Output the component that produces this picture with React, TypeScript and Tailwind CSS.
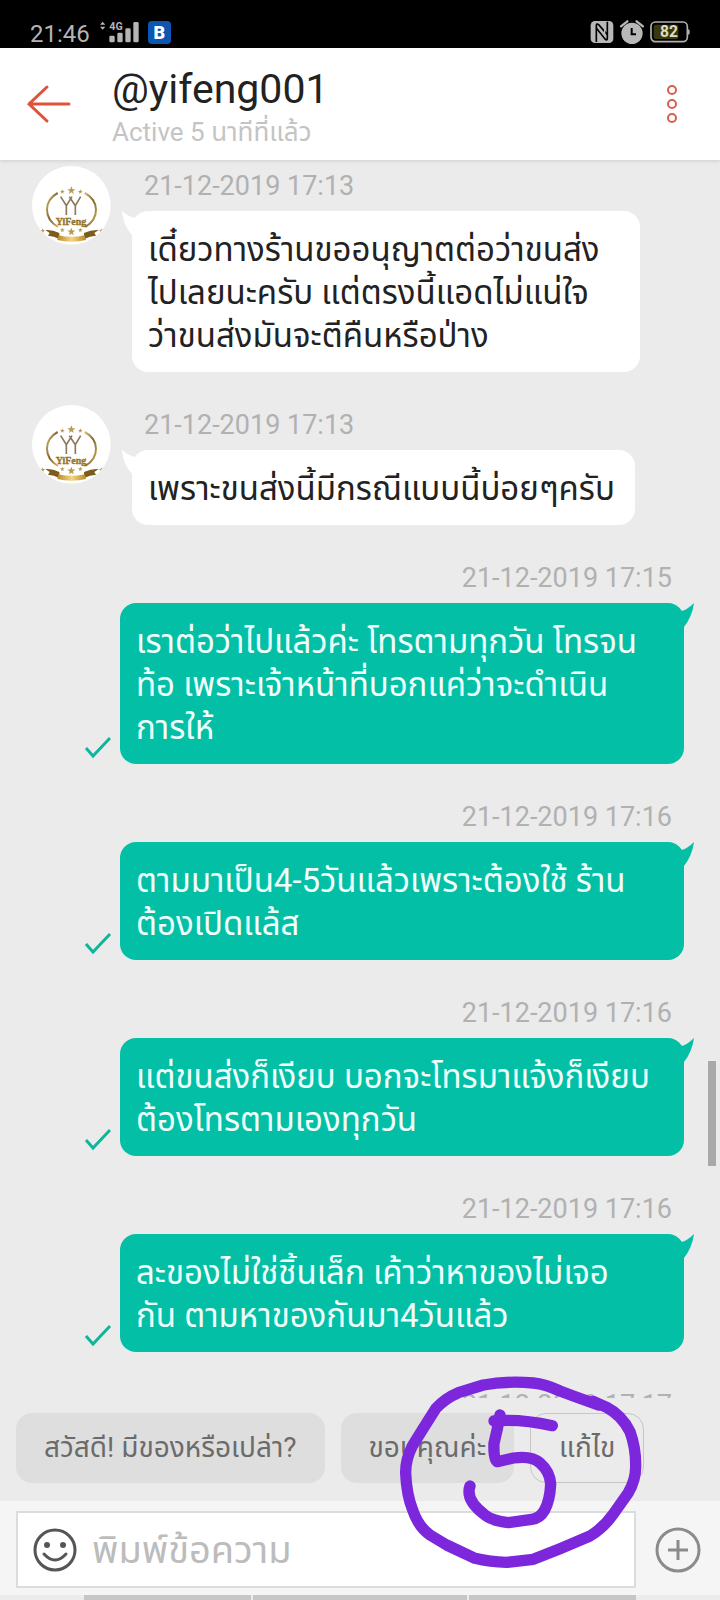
import { useState } from "react";

type Message = {
  id: number;
  mine: boolean;
  time: string;
  text: string;
  wide?: boolean;
};

const MESSAGES: Message[] = [
  {
    id: 1,
    mine: false,
    time: "21-12-2019 17:13",
    text: "เดี๋ยวทางร้านขออนุญาตต่อว่าขนส่ง\nไปเลยนะครับ แต่ตรงนี้แอดไม่แน่ใจ\nว่าขนส่งมันจะตีคืนหรือป่าง",
    wide: true,
  },
  { id: 2, mine: false, time: "21-12-2019 17:13", text: "เพราะขนส่งนี้มีกรณีแบบนี้บ่อยๆครับ" },
  {
    id: 3,
    mine: true,
    time: "21-12-2019 17:15",
    text: "เราต่อว่าไปแล้วค่ะ โทรตามทุกวัน โทรจน\nท้อ เพราะเจ้าหน้าที่บอกแค่ว่าจะดำเนิน\nการให้",
  },
  { id: 4, mine: true, time: "21-12-2019 17:16", text: "ตามมาเป็น4-5วันแล้วเพราะต้องใช้ ร้าน\nต้องเปิดแล้ส" },
  { id: 5, mine: true, time: "21-12-2019 17:16", text: "แต่ขนส่งก็เงียบ บอกจะโทรมาแจ้งก็เงียบ\nต้องโทรตามเองทุกวัน" },
  { id: 6, mine: true, time: "21-12-2019 17:16", text: "ละของไม่ใช่ชิ้นเล็ก เค้าว่าหาของไม่เจอ\nกัน ตามหาของกันมา4วันแล้ว" },
  { id: 7, mine: true, time: "21-12-2019 17:17", text: "" },
];

const STAR = "M0 -10 L3 -3 L10 -3 L4 2 L6 9 L0 5 L-6 9 L-4 2 L-10 -3 L-3 -3 Z";

function StatusBar() {
  return (
    <div className="flex h-12 shrink-0 items-end justify-between bg-black pr-[30px] pl-[30px] text-[#b4b4b4]">
      <div className="flex items-end">
        <span className="text-2xl leading-7">21:46</span>
        <svg className="mb-1 ml-2.5 h-6 w-10" viewBox="0 0 120 72" fill="currentColor" aria-label="4G signal">
          <path d="M0 14 L8 5 L16 14 Z M0 20 L8 29 L16 20 Z" />
          <text x="28" y="30" fontSize="32" fontWeight="700">4G</text>
          <rect x="28" y="47" width="16" height="20" rx="4" />
          <rect x="52" y="38" width="16" height="29" rx="4" />
          <rect x="76" y="25" width="16" height="42" rx="4" />
          <rect x="100" y="6" width="16" height="61" rx="4" />
        </svg>
        <span className="mb-1 ml-2 flex size-[23px] items-center justify-center rounded-sm bg-[#0b56b3] text-lg leading-none font-black text-white">
          B
        </span>
      </div>
      <div className="mb-1 flex items-center gap-1.5">
        <svg className="size-6" viewBox="0 0 72 72" aria-label="NFC">
          <rect x="2" y="3" width="68" height="66" rx="13" fill="#b8b8b8" />
          <path d="M19 66 V17 Q19 9 26 14 L52 44 V5 M52 5 V55 Q52 63 45 57 L19 24" fill="none" stroke="#000" strokeWidth="5" />
          <path d="M28 27 L44 46 V10" fill="none" stroke="#b8b8b8" strokeWidth="4" />
        </svg>
        <svg className="size-6" viewBox="0 0 72 72" aria-label="Alarm">
          <circle cx="36" cy="40" r="32" fill="#b8b8b8" />
          <path d="M3 19 L22 4 M50 4 L69 19" stroke="#b8b8b8" strokeWidth="7" strokeLinecap="round" />
          <path d="M35 24 V43 H48" fill="none" stroke="#000" strokeWidth="6" />
        </svg>
        <svg className="h-6 w-10" viewBox="0 0 120 72" aria-label="Battery 82">
          <rect x="3" y="6" width="109" height="59" rx="13" fill="none" stroke="#b0b0b0" strokeWidth="5" />
          <path d="M114 27 L119 31 V41 L114 45 Z" fill="#b0b0b0" />
          <rect x="11" y="14" width="74" height="43" rx="7" fill="#3b360c" />
          <text x="57" y="52" textAnchor="middle" fontSize="47" fontWeight="700" fill="#dedcc4">82</text>
        </svg>
      </div>
    </div>
  );
}

function ChatHeader() {
  return (
    <header className="relative z-10 flex h-28 shrink-0 items-center bg-white pr-[42px] pl-6 shadow-[0_1px_4px_rgba(0,0,0,0.12)]">
      <button type="button" aria-label="Back" className="h-10 w-12">
        <svg className="h-10 w-12" viewBox="0 0 48 40" fill="none" stroke="#e0523a" strokeWidth="3" strokeLinecap="round">
          <path d="M45 20 H5 M23 3 L5 20 L23 37" />
        </svg>
      </button>
      <div className="ml-10 flex-1 pt-2">
        <h1 className="text-[41px] leading-12 text-[#222222]">@yifeng001</h1>
        <p className="text-[26px] leading-[38px] text-[#c4c4c4]">Active 5 นาทีที่แล้ว</p>
      </div>
      <button type="button" aria-label="More" className="h-10 w-3">
        <svg className="h-10 w-3" viewBox="0 0 12 40" fill="none" stroke="#d4604e" strokeWidth="2">
          <circle cx="6" cy="6" r="4" />
          <circle cx="6" cy="20" r="4" />
          <circle cx="6" cy="34" r="4" />
        </svg>
      </button>
    </header>
  );
}

function Avatar() {
  return (
    <svg className="size-[79px] shrink-0" viewBox="0 0 237 237" role="img" aria-label="YiFeng">
      <defs>
        <linearGradient id="gold" x1="0" y1="0" x2="1" y2="1">
          <stop offset="0" stopColor="#d9bd76" />
          <stop offset="0.5" stopColor="#80642c" />
          <stop offset="1" stopColor="#d8b560" />
        </linearGradient>
        <linearGradient id="ribbon">
          <stop offset="0" stopColor="#b88a2a" />
          <stop offset="0.5" stopColor="#f3d583" />
          <stop offset="1" stopColor="#b88a2a" />
        </linearGradient>
        <clipPath id="disc">
          <circle cx="118" cy="118" r="118" />
        </clipPath>
      </defs>
      <circle cx="118" cy="118" r="118" fill="#fff" />
      <g clipPath="url(#disc)">
        <path d="M77 81 C35 104 33 156 78 183" fill="none" stroke="url(#gold)" strokeWidth="6" />
        <path d="M158 81 C202 104 204 156 160 183" fill="none" stroke="url(#gold)" strokeWidth="6" />
        <path d="M86 92 L103 119 L120 92 M103 119 V147 M112 92 L130 119 L146 92 M130 119 V147" fill="none" stroke="#8b795b" strokeWidth="5" />
        <text x="117" y="176" textAnchor="middle" fontFamily="Liberation Serif, serif" fontSize="30" fontWeight="700" fill="#a07a26" stroke="#8a6a24" strokeWidth="1">
          YiFeng
        </text>
        <g fill="#b99a52">
          <path d={STAR} transform="translate(118 73) scale(1.2)" />
          <path d={STAR} transform="translate(91 77) scale(0.7)" />
          <path d={STAR} transform="translate(145 77) scale(0.7)" />
          <path d={STAR} transform="translate(118 197) scale(1.2)" />
          <path d={STAR} transform="translate(91 192) scale(0.7)" />
          <path d={STAR} transform="translate(145 192) scale(0.7)" />
          <path d={STAR} transform="translate(32 194) scale(0.7)" />
          <path d={STAR} transform="translate(208 194) scale(0.7)" />
        </g>
        <path d="M40 192 Q60 190 82 201 L82 219 Q66 210 48 209 L53 201 Z" fill="#7d5b1b" />
        <path d="M200 192 Q180 190 156 201 L156 219 Q174 210 192 209 L187 201 Z" fill="#7d5b1b" />
        <path d="M80 208 Q118 217 158 208 L162 222 Q118 232 76 222 Z" fill="url(#ribbon)" />
      </g>
    </svg>
  );
}

function Received({ message }: { message: Message }) {
  return (
    <li className="flex gap-[21px] pr-20 pl-8">
      <Avatar />
      <div className="min-w-0 flex-1">
        <time className="ml-3 block text-[27px] leading-10 text-[#b1b1b1]">{message.time}</time>
        <div className={`relative mt-[5px] rounded-2xl bg-white pt-[17px] pr-5 pb-[15px] pl-4 ${message.wide ? "w-full" : "w-fit"}`}>
          <svg className="absolute top-0 -left-[10px] h-6 w-6" viewBox="0 0 24 24" fill="#fff" aria-hidden="true">
            <path d="M0 0 Q8 7 14 7 L24 4 V24 H10 Q1 14 0 0 Z" />
          </svg>
          <p className="relative text-[33px] leading-[43px] whitespace-pre text-[#222222]">{message.text}</p>
        </div>
      </div>
    </li>
  );
}

function Sent({ message }: { message: Message }) {
  return (
    <li className="pr-9">
      <time className="mr-3 block text-right text-[27px] leading-10 text-[#b1b1b1]">{message.time}</time>
      {message.text ? (
        <div className="mt-[5px] flex items-end">
          <svg className="mr-2 mb-1 ml-[84px] h-6 w-7 shrink-0" viewBox="0 0 28 24" fill="none" stroke="#0fb69b" strokeWidth="3" aria-label="Sent">
            <path d="M2 12 L9 20 L26 2" />
          </svg>
          <div className="relative min-w-0 flex-1 rounded-2xl bg-[#02bfa5] px-4 pt-[17px] pb-[15px]">
            <svg className="absolute top-0 -right-[10px] h-6 w-6" viewBox="0 0 24 24" fill="#02bfa5" aria-hidden="true">
              <path d="M24 0 Q17 7 11 8 L0 4 V24 H14 Q22 14 24 0 Z" />
            </svg>
            <p className="relative text-[33px] leading-[43px] whitespace-pre text-[#f0fffc]">{message.text}</p>
          </div>
        </div>
      ) : null}
    </li>
  );
}

function QuickReplies({ onPick }: { onPick: (text: string) => void }) {
  return (
    <div className="flex shrink-0 gap-4 px-4 pt-[15px] pb-[18px] text-[28px] text-[#6b6b6b]">
      <button type="button" onClick={() => onPick("สวัสดี! มีของหรือเปล่า?")} className="h-[70px] rounded-2xl bg-[#dedede] px-7">
        สวัสดี! มีของหรือเปล่า?
      </button>
      <button type="button" onClick={() => onPick("ขอบคุณค่ะ")} className="h-[70px] rounded-2xl bg-[#dedede] px-7">
        ขอบคุณค่ะ
      </button>
      <button type="button" className="h-[70px] rounded-2xl border border-[#c6c6c6] px-7">
        แก้ไข
      </button>
    </div>
  );
}

function Composer({ value, onChange }: { value: string; onChange: (text: string) => void }) {
  return (
    <footer className="shrink-0 bg-[#f5f5f5]">
      <div className="flex items-center gap-[19px] pt-2.5 pr-[19px] pb-[7px] pl-4">
        <div className="flex h-[77px] min-w-0 flex-1 items-center gap-3.5 border-2 border-[#dcdcdc] bg-white pl-3.5">
          <button type="button" aria-label="Emoji">
            <svg className="size-[46px]" viewBox="0 0 46 46" fill="none" stroke="#555555" strokeWidth="3" strokeLinecap="round">
              <circle cx="23" cy="23" r="20" />
              <path d="M12 27 Q23 39 34 27" />
              <circle cx="15" cy="18" r="3" fill="#555555" stroke="none" />
              <circle cx="31" cy="18" r="3" fill="#555555" stroke="none" />
            </svg>
          </button>
          <input
            type="text"
            aria-label="พิมพ์ข้อความ"
            placeholder="พิมพ์ข้อความ"
            value={value}
            onChange={(e) => onChange(e.target.value)}
            className="h-full min-w-0 flex-1 text-[38px] text-[#222222] outline-none placeholder:text-[#bcbcbc]"
          />
        </div>
        <button type="button" aria-label="Attach">
          <svg className="size-[46px]" viewBox="0 0 46 46" fill="none" stroke="#8b8b8b" strokeWidth="3">
            <circle cx="23" cy="23" r="21" />
            <path d="M23 13 V33 M13 23 H33" />
          </svg>
        </button>
      </div>
      <div className="flex h-[5px] gap-0.5 bg-[#ececec] pr-[84px] pl-[84px]">
        <div className="w-[167px] bg-[#c6c6c6]" />
        <div className="flex-[214] bg-[#c6c6c6]" />
        <div className="w-[167px] bg-[#c6c6c6]" />
      </div>
    </footer>
  );
}

function PenMark() {
  return (
    <svg
      className="pointer-events-none absolute bottom-0 left-[360px] z-20 h-[240px] w-[360px]"
      viewBox="0 0 1080 720"
      fill="none"
      stroke="#7d27dc"
      strokeWidth="34"
      strokeLinecap="round"
      strokeLinejoin="round"
      aria-label="5"
    >
      <path d="M715 135 L640 108 L600 93 Q555 72 520 69 Q440 62 370 75 L295 98 Q255 115 228 145 L190 205 L157 258 Q136 300 137 340 Q140 405 158 450 Q175 500 210 525 L260 555 L345 595 Q390 606 440 607 L520 598 L600 566 L690 528 Q730 504 760 462 L805 398 Q827 360 827 320 Q828 265 810 215 Q785 165 740 142 L700 124" />
      <path d="M402 183 Q480 176 577 197" />
      <path d="M420 165 Q412 210 402 250 Q400 300 412 305 L460 294 Q515 286 540 309 Q570 335 572 372 Q570 420 554 450 Q540 475 515 478 L445 488 Q395 482 375 465 Q315 420 330 378" />
    </svg>
  );
}

export default function App() {
  const [draft, setDraft] = useState("");

  return (
    <div className="relative flex h-screen flex-col overflow-hidden bg-[#ebebeb] font-[Roboto,'Noto_Sans_Thai','Noto_Sans',sans-serif]">
      <StatusBar />
      <ChatHeader />
      <main className="relative min-h-0 flex-1 overflow-hidden">
        <ul className="flex flex-col gap-[33px] pt-1.5">
          {MESSAGES.map((m) => (m.mine ? <Sent key={m.id} message={m} /> : <Received key={m.id} message={m} />))}
        </ul>
        <div className="absolute top-[901px] right-1 h-[105px] w-2 bg-[#a9a9a9]" />
      </main>
      <QuickReplies onPick={setDraft} />
      <Composer value={draft} onChange={setDraft} />
      <PenMark />
    </div>
  );
}
